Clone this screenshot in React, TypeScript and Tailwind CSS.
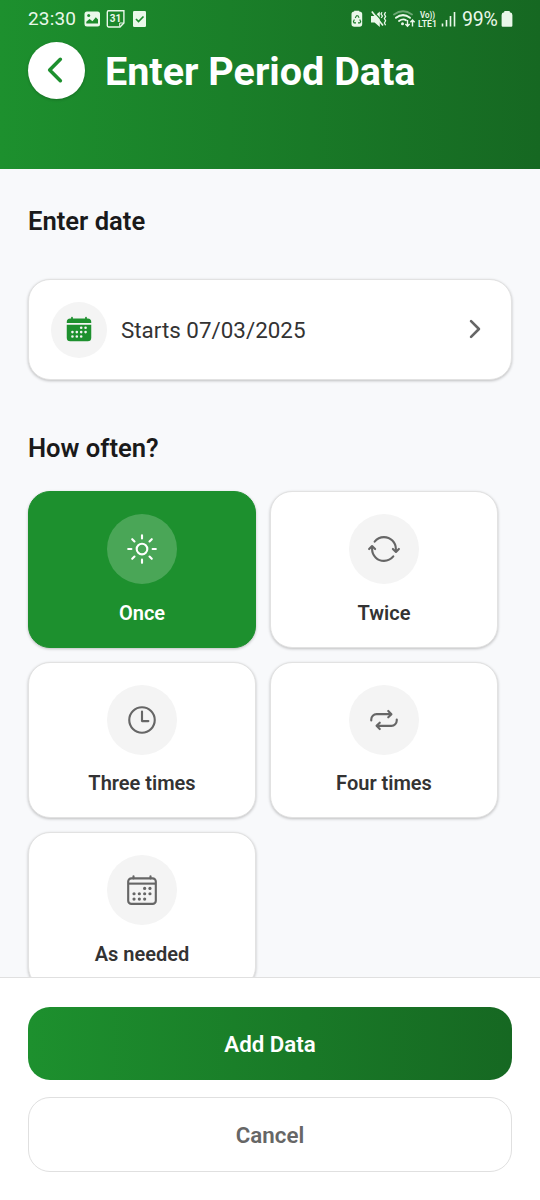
import React from "react";
import {
  IoCalendar,
  IoCalendarOutline,
  IoChevronBack,
  IoChevronForward,
  IoRepeatOutline,
  IoSunnyOutline,
  IoSyncOutline,
  IoTimeOutline,
} from "react-icons/io5";
import type { IconType } from "react-icons";

const options: { label: string; icon: IconType }[] = [
  { label: "Once", icon: IoSunnyOutline },
  { label: "Twice", icon: IoSyncOutline },
  { label: "Three times", icon: IoTimeOutline },
  { label: "Four times", icon: IoRepeatOutline },
  { label: "As needed", icon: IoCalendarOutline },
];

function StatusLeft() {
  return (
    <div className="flex items-center">
      <span className="w-[56px] text-[19px] tracking-[0.15px]">23:30</span>
      <svg width="64" height="20" viewBox="0 0 64 20" fill="none">
        <rect x="0.5" y="2.5" width="15.5" height="15" rx="2.5" fill="#eaf8ea" />
        <circle cx="4.7" cy="6.5" r="1.5" fill="#1d8c2c" />
        <path d="M2.3 14.5V12.8L5.5 10L8.5 12.3L11.8 8.3L14 10.5V14.5Z" fill="#1d8c2c" />
        <path d="M24.5 1.8H39.9V14L36 18H24.5Q23.3 18 23.3 16.6V3.2Q23.3 1.8 24.5 1.8Z" stroke="#eaf8ea" strokeWidth="1.4" />
        <path d="M35.7 17.5V14H39.5" stroke="#eaf8ea" />
        <text x="31.5" y="13.2" fill="#eaf8ea" fontFamily="Roboto" fontWeight="700" fontSize="10" textAnchor="middle">31</text>
        <rect x="49" y="2" width="13" height="16" rx="1.3" fill="#eaf8ea" />
        <path d="M52 10L54.5 12.5L59.5 7.5" stroke="#1d8c2c" strokeWidth="1.7" />
      </svg>
    </div>
  );
}

function StatusRight() {
  return (
    <div className="flex items-center">
      <svg width="110" height="24" viewBox="350 7 110 24" fill="none">
        <path d="M354.2 11.5v-.7h5v.7q3 0 3 2.6V24q0 2.8-2.6 2.8h-5.4q-2.7 0-2.7-2.8v-9.9q0-2.6 2.7-2.6Z" fill="#eaf8ea" />
        <path d="M355.2 18l1.3-2.2h1.4l1.2 2M359.7 19.5l1 2.3-.8 1.1H358M356 22.9h-1.9l-.7-1.2 1-2.1" stroke="#1b7b2a" strokeWidth="1.1" />
        <path d="M371 16h3.6l5.2-4.4V27l-5.2-4.4H371Z" fill="#eaf8ea" />
        <path d="M373.2 11.2L384.5 23.5" stroke="#1b7c29" strokeWidth="1.2" />
        <path d="M371.8 11.6L383 25.6" stroke="#eaf8ea" strokeWidth="1.6" />
        <path d="M382 12.2l-1 1.8 1.4 2-1.2 2M385.6 12.2l-1.2 2 1.2 2.2-1.2 2.2 1.2 2.2-1.2 2.2 1.2 2.2" stroke="#eaf8ea" strokeWidth="1.3" />
        <g stroke="#eaf8ea" strokeLinecap="round">
          <path d="M394 14.5Q403 8 412 14.5" strokeWidth="1.8" opacity="0.4" />
          <path d="M396 17.8Q403 12.5 410 17.8" strokeWidth="2" />
          <path d="M399 21Q403 18.2 406 20.2" strokeWidth="1.9" />
        </g>
        <circle cx="402.5" cy="23.7" r="1.5" fill="#eaf8ea" />
        <path d="M407.5 20V26M405.4 24l2.1 2.2 2.1-2.2M412.5 26.5V20M410.4 22.3l2.1-2.3 2.1 2.3" stroke="#eaf8ea" strokeWidth="1.4" />
        <g fill="#eaf8ea" fontFamily="Roboto" fontWeight="600">
          <text x="420" y="18" fontSize="8.5" textLength="15" lengthAdjust="spacingAndGlyphs">Vo))</text>
          <text x="418" y="26.6" fontSize="9.2" textLength="19" lengthAdjust="spacingAndGlyphs">LTE1</text>
        </g>
        <path d="M442.5 23.5v3M446.5 20v6.5M450.5 16v10.5M454.5 12v14.5" stroke="#eaf8ea" strokeWidth="1.6" />
      </svg>
      <span className="ml-[2px] w-[39px] pt-px text-[19.5px] tracking-[-0.2px]">99%</span>
      <svg width="12" height="18" viewBox="0 0 12 18">
        <path d="M3.2 2.3V1.5Q3.2 1 3.8 1h4.4q.6 0 .6.5v.8Q11.4 2.6 11.4 5V15.5q0 1.2-1.2 1.2H1.8Q.6 16.7.6 15.5V5Q.6 2.6 3.2 2.3Z" fill="#eaf8ea" />
      </svg>
    </div>
  );
}

function OptionCard({ label, icon: Icon, selected }: { label: string; icon: IconType; selected: boolean }) {
  return (
    <button
      className={
        "flex h-[156.6px] flex-col items-center rounded-[22px] border-[1.4px] pt-[22px] shadow-[0_1px_3px_rgba(0,0,0,0.24)] " +
        (selected ? "border-[#1d902e] bg-[#1d902e] text-white" : "border-[#e2e2e2] bg-white text-[#333333]")
      }
    >
      <span
        className={
          "flex size-[70px] shrink-0 items-center justify-center rounded-full " +
          (selected ? "bg-white/20 text-white" : "bg-[#f4f4f4] text-[#666666]")
        }
      >
        <Icon size={34} />
      </span>
      <span className="mt-[15.5px] text-[20px] leading-[26px] font-semibold">{label}</span>
    </button>
  );
}

export default function App() {
  return (
    <div className="flex h-[1200px] w-[540px] flex-col overflow-hidden bg-[#f8f9fb] font-[Roboto,sans-serif]">
      <header className="h-[169px] shrink-0 bg-[linear-gradient(90deg,#1d902e,#166822)]">
        <div className="flex h-[38px] items-center justify-between pr-[27px] pl-[28px] text-[#eaf8ea]">
          <StatusLeft />
          <StatusRight />
        </div>
        <div className="flex items-center pt-1 pl-7">
          <button className="flex size-[56.5px] items-center justify-center rounded-full bg-white pr-[2px] pb-px text-[#1d902e] shadow-[0_1px_3px_rgba(0,0,0,0.2)]" aria-label="Back">
            <IoChevronBack size={38} />
          </button>
          <h1 className="ml-[20.5px] pt-[3.5px] text-[39.5px] leading-[48px] font-bold whitespace-nowrap text-white">Enter Period Data</h1>
        </div>
      </header>

      <main className="min-h-0 flex-1 overflow-hidden px-7 pt-[35px]">
        <h2 className="text-[25.6px] leading-[34px] font-semibold text-[#1a1a1a]">Enter date</h2>
        <button className="mt-[41px] flex h-[101px] w-full items-center rounded-[22px] border-[1.4px] border-[#e2e2e2] bg-white pr-[22px] pl-[22px] shadow-[0_1px_3px_rgba(0,0,0,0.24)]">
          <span className="flex size-[56px] items-center justify-center rounded-full bg-[#f4f4f4] pr-px pb-px text-[#1d902e]">
            <IoCalendar size={28} />
          </span>
          <span className="ml-[14px] flex-1 pt-[2px] text-left text-[22.4px] text-[#333333]">Starts 07/03/2025</span>
          <IoChevronForward size={28} className="mb-px text-[#666666]" />
        </button>
        <h2 className="mt-[51px] text-[25.6px] leading-[34px] font-semibold text-[#1a1a1a]">How often?</h2>
        <div className="mt-[26px] grid grid-cols-[228px_228px] gap-[14px]">
          {options.map((option) => (
            <OptionCard key={option.label} {...option} selected={option.label === "Once"} />
          ))}
        </div>
      </main>

      <footer className="flex h-[223px] shrink-0 flex-col gap-[17px] border-t-[1.4px] border-[#e0e0e0] bg-white px-7 pt-[29px]">
        <button className="h-[73px] shrink-0 rounded-[22px] bg-[linear-gradient(90deg,#1d902e,#166822)] pt-[2px] text-[22.3px] font-semibold text-white">
          Add Data
        </button>
        <button className="h-[75px] shrink-0 rounded-[22px] border-[1.4px] border-[#e0e0e0] bg-white pt-[2px] text-[22.3px] font-semibold text-[#666666]">
          Cancel
        </button>
      </footer>
    </div>
  );
}
